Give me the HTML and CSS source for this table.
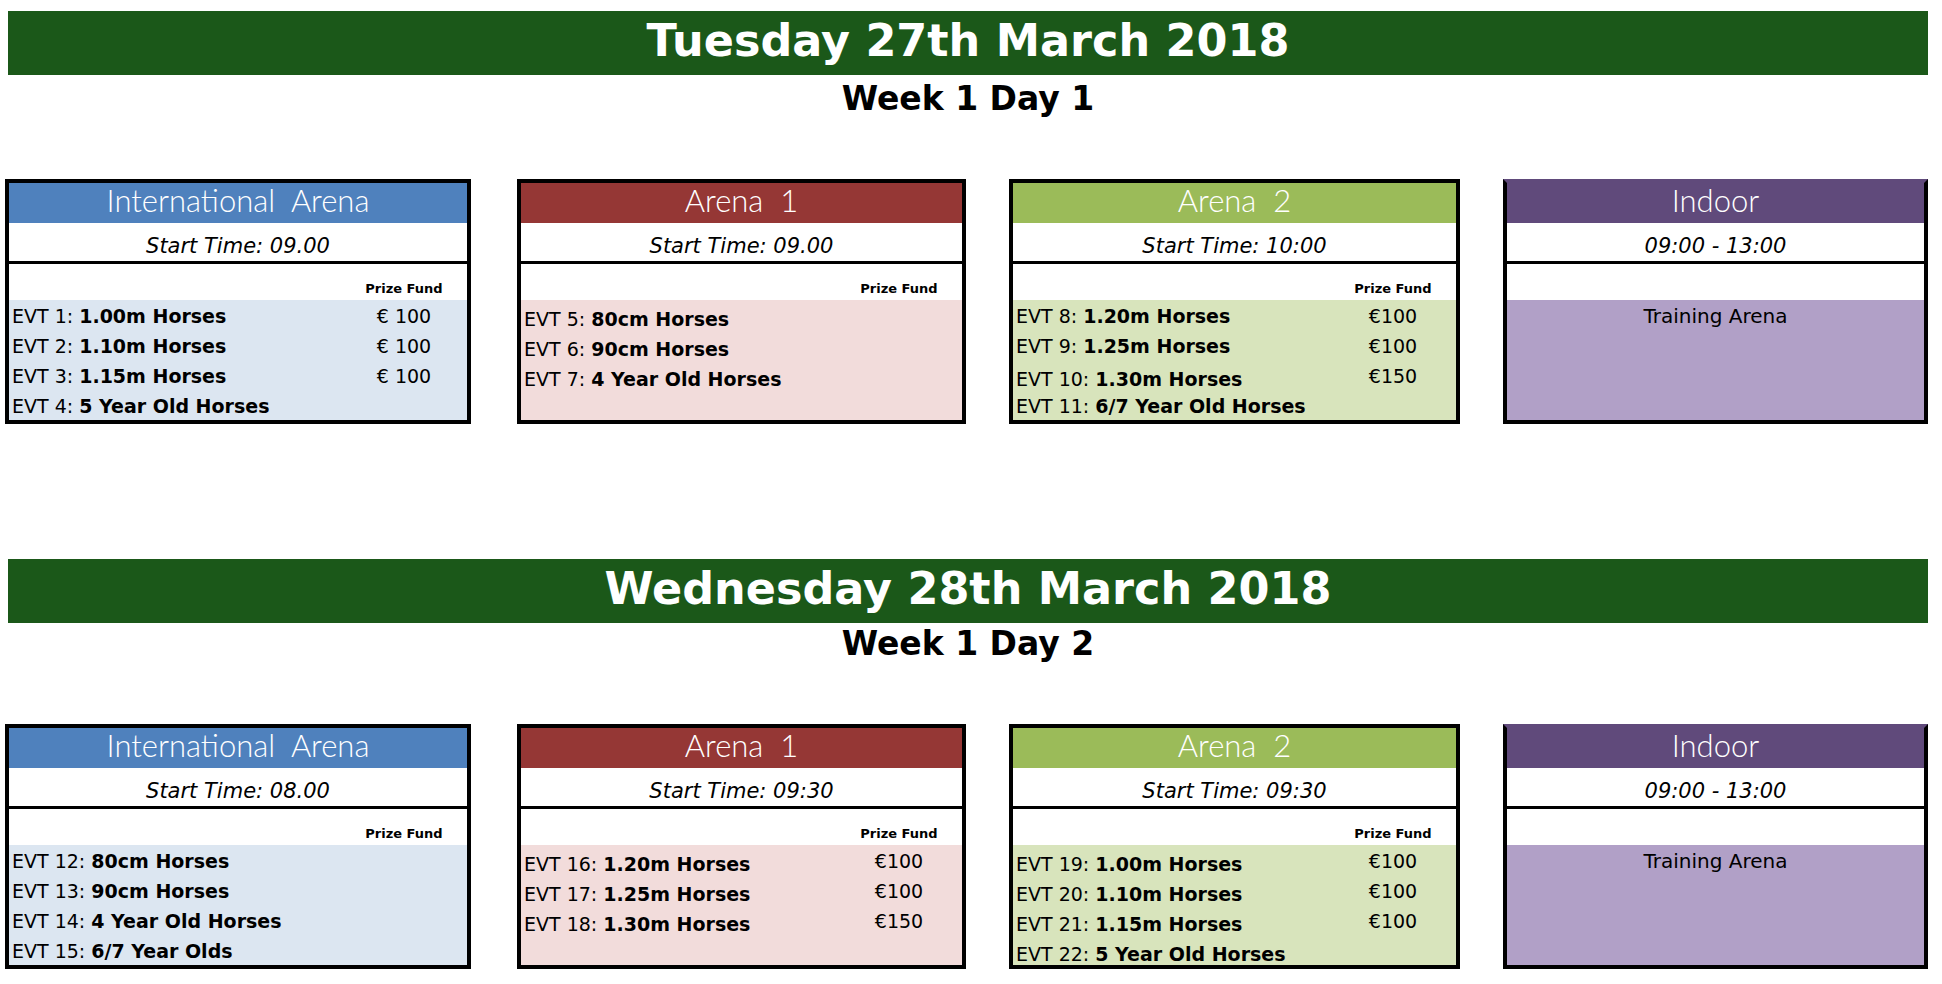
FILE: index.html
```html
<!DOCTYPE html>
<html lang="en">
<head>
<meta charset="utf-8">
<title>Schedule</title>
<link rel="stylesheet" href="styles.css">
</head>
<body>
<div class="page">

  <section class="day">
    <h1 class="day-bar">Tuesday 27th March 2018</h1>
    <h2 class="day-sub">Week 1 Day 1</h2>
    <div class="cards">
      <div class="card card--intl">
        <div class="card-head">International  Arena</div>
        <div class="card-time">Start Time: 09.00</div>
        <div class="card-sub"><span class="sub-gap"></span><span class="prize-head">Prize Fund</span></div>
        <div class="card-body">
          <div class="row"><span class="evt">EVT 1: <b>1.00m Horses</b></span><span class="prize">€ 100</span></div>
          <div class="row"><span class="evt">EVT 2: <b>1.10m Horses</b></span><span class="prize">€ 100</span></div>
          <div class="row"><span class="evt">EVT 3: <b>1.15m Horses</b></span><span class="prize">€ 100</span></div>
          <div class="row"><span class="evt">EVT 4: <b>5 Year Old Horses</b></span><span class="prize"></span></div>
        </div>
      </div>
      <div class="card card--a1">
        <div class="card-head">Arena  1</div>
        <div class="card-time">Start Time: 09.00</div>
        <div class="card-sub"><span class="sub-gap"></span><span class="prize-head">Prize Fund</span></div>
        <div class="card-body">
          <div class="row row--low"><span class="evt">EVT 5: <b>80cm Horses</b></span><span class="prize"></span></div>
          <div class="row row--low"><span class="evt">EVT 6: <b>90cm Horses</b></span><span class="prize"></span></div>
          <div class="row row--low"><span class="evt">EVT 7: <b>4 Year Old Horses</b></span><span class="prize"></span></div>
          <div class="row"></div>
        </div>
      </div>
      <div class="card card--a2">
        <div class="card-head">Arena  2</div>
        <div class="card-time">Start Time: 10:00</div>
        <div class="card-sub"><span class="sub-gap"></span><span class="prize-head">Prize Fund</span></div>
        <div class="card-body">
          <div class="row"><span class="evt">EVT 8: <b>1.20m Horses</b></span><span class="prize">€100</span></div>
          <div class="row"><span class="evt">EVT 9: <b>1.25m Horses</b></span><span class="prize">€100</span></div>
          <div class="row"><span class="evt evt--low">EVT 10: <b>1.30m Horses</b></span><span class="prize">€150</span></div>
          <div class="row"><span class="evt">EVT 11: <b>6/7 Year Old Horses</b></span><span class="prize"></span></div>
        </div>
      </div>
      <div class="card card--indoor">
        <div class="card-head">Indoor</div>
        <div class="card-time">09:00 - 13:00</div>
        <div class="card-sub"></div>
        <div class="card-body">
          <div class="row row--center">Training Arena</div>
        </div>
      </div>
    </div>
  </section>

  <section class="day day--second">
    <h1 class="day-bar">Wednesday 28th March 2018</h1>
    <h2 class="day-sub">Week 1 Day 2</h2>
    <div class="cards">
      <div class="card card--intl">
        <div class="card-head">International  Arena</div>
        <div class="card-time">Start Time: 08.00</div>
        <div class="card-sub"><span class="sub-gap"></span><span class="prize-head">Prize Fund</span></div>
        <div class="card-body">
          <div class="row"><span class="evt">EVT 12: <b>80cm Horses</b></span><span class="prize"></span></div>
          <div class="row"><span class="evt">EVT 13: <b>90cm Horses</b></span><span class="prize"></span></div>
          <div class="row"><span class="evt">EVT 14: <b>4 Year Old Horses</b></span><span class="prize"></span></div>
          <div class="row"><span class="evt">EVT 15: <b>6/7 Year Olds</b></span><span class="prize"></span></div>
        </div>
      </div>
      <div class="card card--a1">
        <div class="card-head">Arena  1</div>
        <div class="card-time">Start Time: 09:30</div>
        <div class="card-sub"><span class="sub-gap"></span><span class="prize-head">Prize Fund</span></div>
        <div class="card-body">
          <div class="row"><span class="evt evt--low">EVT 16: <b>1.20m Horses</b></span><span class="prize">€100</span></div>
          <div class="row"><span class="evt evt--low">EVT 17: <b>1.25m Horses</b></span><span class="prize">€100</span></div>
          <div class="row"><span class="evt evt--low">EVT 18: <b>1.30m Horses</b></span><span class="prize">€150</span></div>
          <div class="row"></div>
        </div>
      </div>
      <div class="card card--a2">
        <div class="card-head">Arena  2</div>
        <div class="card-time">Start Time: 09:30</div>
        <div class="card-sub"><span class="sub-gap"></span><span class="prize-head">Prize Fund</span></div>
        <div class="card-body">
          <div class="row"><span class="evt evt--low">EVT 19: <b>1.00m Horses</b></span><span class="prize">€100</span></div>
          <div class="row"><span class="evt evt--low">EVT 20: <b>1.10m Horses</b></span><span class="prize">€100</span></div>
          <div class="row"><span class="evt evt--low">EVT 21: <b>1.15m Horses</b></span><span class="prize">€100</span></div>
          <div class="row"><span class="evt evt--low">EVT 22: <b>5 Year Old Horses</b></span><span class="prize"></span></div>
        </div>
      </div>
      <div class="card card--indoor">
        <div class="card-head">Indoor</div>
        <div class="card-time">09:00 - 13:00</div>
        <div class="card-sub"></div>
        <div class="card-body">
          <div class="row row--center">Training Arena</div>
        </div>
      </div>
    </div>
  </section>

</div>
</body>
</html>
```

FILE: styles.css
```css
html, body {
  margin: 0;
  padding: 0;
  background: #ffffff;
}

body {
  font-family: "DejaVu Sans", "Liberation Sans", sans-serif;
  color: #000000;
}

.page {
  box-sizing: border-box;
  width: 1942px;
  padding: 11px 0 0 5px;
}

.day {
  margin: 0;
}

.day + .day {
  margin-top: 135px;
}

.day-bar {
  box-sizing: border-box;
  margin: 0 0 0 3px;
  width: 1920px;
  height: 64px;
  padding-bottom: 5px;
  background: #1b5819;
  color: #ffffff;
  text-align: center;
  font-family: "DejaVu Sans", sans-serif;
  font-weight: bold;
  font-size: 44.5px;
  line-height: 59px;
  white-space: nowrap;
}

.day-sub {
  box-sizing: border-box;
  margin: 0 0 0 3px;
  width: 1920px;
  height: 104px;
  padding-top: 5px;
  text-align: center;
  font-family: "DejaVu Sans", sans-serif;
  font-weight: bold;
  font-size: 33px;
  line-height: 38px;
}

.day--second .day-sub {
  height: 101px;
  padding-top: 2px;
}

.cards {
  display: flex;
  align-items: flex-start;
}

.card {
  box-sizing: border-box;
  border: 4px solid #000000;
  flex: none;
}

.card--intl {
  width: 466px;
}

.card--a1 {
  width: 449px;
  margin-left: 46px;
}

.card--a2 {
  width: 451px;
  margin-left: 43px;
}

.card--indoor {
  width: 425px;
  margin-left: 43px;
  border-top-color: #604a7b;
}

.card-head {
  box-sizing: border-box;
  height: 40px;
  padding-bottom: 6px;
  color: #ffffff;
  text-align: center;
  font-family: Lato, "DejaVu Sans", sans-serif;
  font-weight: 300;
  font-size: 31px;
  line-height: 34px;
  white-space: pre;
}

.card--intl .card-head { background: #4f81bd; }
.card--a1 .card-head { background: #953735; }
.card--a2 .card-head { background: #9bbb59; }
.card--indoor .card-head { background: #604a7b; }

.card-time {
  box-sizing: border-box;
  height: 41px;
  padding-top: 7px;
  border-bottom: 3px solid #000000;
  background: #ffffff;
  text-align: center;
  font-style: italic;
  font-size: 21px;
  line-height: 32px;
}

.card-sub {
  box-sizing: border-box;
  display: flex;
  align-items: flex-end;
  height: 36px;
  padding-bottom: 5px;
  background: #ffffff;
}

.sub-gap {
  flex: 1;
}

.prize-head {
  width: 126px;
  text-align: center;
  font-weight: bold;
  font-size: 13px;
  line-height: 13px;
}

.card-body {
  height: 120px;
}

.card--intl .card-body { background: #dce6f1; }
.card--a1 .card-body { background: #f2dcdb; }
.card--a2 .card-body { background: #d8e4bc; }
.card--indoor .card-body { background: #b1a0c7; }

.row {
  box-sizing: border-box;
  display: flex;
  height: 30px;
  padding: 2px 0 0 3px;
  font-size: 19px;
  line-height: 28px;
  white-space: nowrap;
}

.row--center {
  justify-content: center;
  padding-left: 0;
  font-size: 20px;
}

.evt {
  flex: 1;
}

.evt--low,
.row--low .evt {
  padding-top: 3px;
}

.evt b {
  font-weight: bold;
}

.prize {
  width: 126px;
  text-align: center;
}
```
